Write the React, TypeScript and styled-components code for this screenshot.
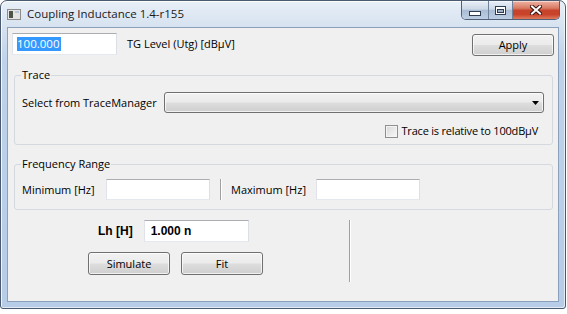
import React from "react";
import styled, { createGlobalStyle } from "styled-components";

const UI = `"Open Sans", "Noto Sans", "DejaVu Sans", sans-serif`;
const FS = 11;

const GlobalStyle = createGlobalStyle`
  html, body { margin: 0; padding: 0; background: #ffffff; }
  body { font-family: ${UI}; font-size: ${FS}px; color: #000; }
  * { box-sizing: border-box; }
`;

const Window = styled.div`
  width: 566px;
  height: 309px;
  border: 1px solid #4a5a70;
  border-radius: 7px 7px 3px 3px;
  background: linear-gradient(180deg, #e8eff7 0px, #d6e2f0 26px, #bed2ea 60px, #b6cce7 100%);
  box-shadow: inset 1px 1px 0 rgba(255, 255, 255, 0.8), inset -1px -1px 0 rgba(255, 255, 255, 0.6);
  display: flex;
  flex-direction: column;
  padding: 0 6px 6px 6px;
  overflow: hidden;
`;

const TitleBar = styled.div`
  height: 26px;
  display: flex;
  align-items: flex-start;
  margin-right: -1px;
`;

const AppIcon = styled.svg`
  margin-top: 8px;
  flex: none;
`;

const Title = styled.div`
  margin-left: 6px;
  margin-top: 5px;
  font-size: ${FS + 0.5}px;
  line-height: 16px;
  color: #1a1a1a;
  white-space: nowrap;
`;

const Caption = styled.div`
  margin-left: auto;
  display: flex;
  height: 19px;
  border: 1px solid #4f6078;
  border-top: 0;
  border-radius: 0 0 5px 5px;
  overflow: hidden;
`;

const CapButton = styled.div<{ $w: number; $close?: boolean }>`
  width: ${(p) => p.$w}px;
  display: flex;
  align-items: center;
  justify-content: center;
  border-right: ${(p) => (p.$close ? "0" : "1px solid #6f8299")};
  background: ${(p) =>
    p.$close
      ? "linear-gradient(180deg, #eeb3a4 0%, #d87a63 40%, #c8432b 52%, #c9432a 75%, #e07a5c 100%)"
      : "linear-gradient(180deg, #e9eff7 0%, #cdd9e8 45%, #aabdd5 52%, #bdcee3 100%)"};
  box-shadow: inset 0 1px 0 rgba(255, 255, 255, 0.5);
`;

const Client = styled.div`
  flex: 1;
  border: 1px solid #8aa0bb;
  background: #f0f0f0;
  display: flex;
  flex-direction: column;
`;

const TopRow = styled.div`
  display: flex;
  align-items: flex-start;
  padding: 5px 4px 0 4px;
`;

const TextBox = styled.div<{ $w: number; $h?: number; $bold?: boolean; $pl?: number }>`
  width: ${(p) => p.$w}px;
  height: ${(p) => p.$h ?? 22}px;
  flex: none;
  background: #ffffff;
  border: 1px solid;
  border-color: #abadb3 #dbdfe6 #e3e9ef #e2e3ea;
  display: flex;
  align-items: center;
  padding-left: ${(p) => p.$pl ?? 4}px;
  font-family: ${(p) => (p.$bold ? `"Liberation Sans", Arial, sans-serif` : UI)};
  font-weight: ${(p) => (p.$bold ? 700 : 400)};
  font-size: ${(p) => (p.$bold ? 12 : FS)}px;
  white-space: nowrap;
`;

const Selected = styled.span`
  background: #3399ff;
  color: #ffffff;
  line-height: 14px;
  padding: 0 2px 0 0;
  font-size: 11.5px;
`;

const Label = styled.span<{ $w?: number; $ml?: number; $bold?: boolean }>`
  ${(p) => (p.$w ? `width: ${p.$w}px;` : "")}
  ${(p) => (p.$ml ? `margin-left: ${p.$ml}px;` : "")}
  flex: none;
  font-size: ${(p) => (p.$bold ? 12 : FS)}px;
  line-height: 16px;
  white-space: nowrap;
  font-family: ${(p) => (p.$bold ? `"Liberation Sans", Arial, sans-serif` : UI)};
  font-weight: ${(p) => (p.$bold ? 700 : 400)};
`;

const Button = styled.button<{ $w: number; $h: number; $auto?: boolean; $mt?: number }>`
  width: ${(p) => p.$w}px;
  height: ${(p) => p.$h}px;
  flex: none;
  margin: ${(p) => p.$mt ?? 0}px 0 0 ${(p) => (p.$auto ? "auto" : "0")};
  padding: 0;
  border: 1px solid #707070;
  border-radius: 3px;
  background: linear-gradient(180deg, #f2f2f2 0%, #ebebeb 48%, #dddddd 52%, #cfcfcf 100%);
  box-shadow: inset 0 0 0 1px rgba(255, 255, 255, 0.7);
  font-family: ${UI};
  font-size: ${FS}px;
  color: #000;
  line-height: 16px;
`;

const Group = styled.fieldset`
  margin: 11px 5px 0 6px;
  padding: 0;
  border: 1px solid #d3d9de;
  border-radius: 3px;
  min-width: 0;
`;

const Legend = styled.legend`
  margin-left: 6px;
  padding: 0 1px;
  font-size: ${FS}px;
  line-height: 16px;
`;

const GroupBody = styled.div<{ $pt: number; $pb: number }>`
  padding: ${(p) => p.$pt}px 7px ${(p) => p.$pb}px 7px;
  display: flex;
  flex-direction: column;
`;

const Row = styled.div<{ $h: number; $mt?: number; $end?: boolean }>`
  display: flex;
  align-items: center;
  height: ${(p) => p.$h}px;
  margin-top: ${(p) => p.$mt ?? 0}px;
  justify-content: ${(p) => (p.$end ? "flex-end" : "flex-start")};
`;

const Combo = styled.div`
  flex: 1;
  height: 21px;
  margin-left: 7px;
  margin-right: 1px;
  border: 1px solid #707070;
  border-radius: 3px;
  background: linear-gradient(180deg, #f2f2f2 0%, #ebebeb 48%, #dddddd 52%, #cfcfcf 100%);
  box-shadow: inset 0 0 0 1px rgba(255, 255, 255, 0.7);
  display: flex;
  align-items: center;
  justify-content: flex-end;
  padding-right: 4px;
`;

const CheckBox = styled.span`
  width: 13px;
  height: 13px;
  flex: none;
  border: 1px solid #8f8f8f;
  background: linear-gradient(135deg, #d6d6d6 0%, #ececec 60%, #f8f8f8 100%);
  box-shadow: inset 0 0 0 1px #f4f4f4;
  margin-right: 4px;
`;

const CheckLabel = styled.span`
  font-size: ${FS}px;
  line-height: 16px;
  letter-spacing: -0.2px;
  margin-right: 7px;
`;

const VSep = styled.div<{ $h: number; $mx?: number }>`
  width: 1px;
  height: ${(p) => p.$h}px;
  flex: none;
  margin: 0 ${(p) => p.$mx ?? 0}px;
  background: #a0a0a0;
  box-shadow: 1px 0 0 #ffffff;
`;

const BottomPanel = styled.div`
  display: flex;
  align-items: flex-start;
  padding-top: 10px;
`;

const LeftCol = styled.div`
  width: 341px;
  flex: none;
  display: flex;
  flex-direction: column;
  padding-left: 80px;
`;

const LhRow = styled.div`
  display: flex;
  align-items: center;
  gap: 11px;
  margin-left: 10px;
  height: 22px;
`;

const ButtonRow = styled.div`
  display: flex;
  gap: 11px;
  margin-top: 10px;
`;

export default function App() {
  return (
    <>
      <GlobalStyle />
      <Window>
        <TitleBar>
          <AppIcon width="14" height="11" viewBox="0 0 14 11">
            <rect x="0.5" y="0.5" width="13" height="10" fill="#e4e4e4" stroke="#8c8c8c" />
            <rect x="2" y="2" width="4" height="7" fill="#4b5548" />
            <rect x="8" y="2" width="4" height="2" fill="#b9c7d8" />
          </AppIcon>
          <Title>Coupling Inductance 1.4-r155</Title>
          <Caption>
            <CapButton $w={27}>
              <svg width="12" height="5" viewBox="0 0 12 5" style={{ marginTop: 6 }}>
                <rect x="0.5" y="0.5" width="11" height="4" fill="#ffffff" stroke="#2e3d52" />
              </svg>
            </CapButton>
            <CapButton $w={24}>
              <svg width="11" height="9" viewBox="0 0 11 9">
                <rect x="0.5" y="0.5" width="10" height="8" fill="#ffffff" stroke="#2e3d52" />
                <rect x="2.5" y="3.5" width="6" height="3" fill="#9fb2c8" stroke="#2e3d52" />
              </svg>
            </CapButton>
            <CapButton $w={46} $close>
              <svg width="12" height="10" viewBox="0 0 12 10">
                <path d="M2 1.5 L10 8.5 M10 1.5 L2 8.5" stroke="#3a1410" strokeWidth="4" strokeLinecap="square" />
                <path d="M2 1.5 L10 8.5 M10 1.5 L2 8.5" stroke="#ffffff" strokeWidth="2" strokeLinecap="square" />
              </svg>
            </CapButton>
          </Caption>
        </TitleBar>
        <Client>
          <TopRow>
            <TextBox $w={105}>
              <Selected>100.000</Selected>
            </TextBox>
            <Label $ml={10} style={{ marginTop: 3 }}>TG Level (Utg) [dBµV]</Label>
            <Button $w={82} $h={22} $auto $mt={1}>Apply</Button>
          </TopRow>

          <Group>
            <Legend>Trace</Legend>
            <GroupBody $pt={9} $pb={5}>
              <Row $h={21}>
                <Label>Select from TraceManager</Label>
                <Combo>
                  <svg width="7" height="4" viewBox="0 0 7 4">
                    <path d="M0 0 H7 L3.5 4 Z" fill="#000" />
                  </svg>
                </Combo>
              </Row>
              <Row $h={16} $mt={10} $end>
                <CheckBox />
                <CheckLabel>Trace is relative to 100dBµV</CheckLabel>
              </Row>
            </GroupBody>
          </Group>

          <Group>
            <Legend>Frequency Range</Legend>
            <GroupBody $pt={7} $pb={9}>
              <Row $h={21}>
                <Label $w={84}>Minimum [Hz]</Label>
                <TextBox $w={104} $h={21} />
                <VSep $h={21} $mx={10} />
                <Label $w={85}>Maximum [Hz]</Label>
                <TextBox $w={104} $h={21} />
              </Row>
            </GroupBody>
          </Group>

          <BottomPanel>
            <LeftCol>
              <LhRow>
                <Label $bold>Lh [H]</Label>
                <TextBox $w={105} $bold $pl={6}>1.000 n</TextBox>
              </LhRow>
              <ButtonRow>
                <Button $w={82} $h={23}>Simulate</Button>
                <Button $w={82} $h={23}>Fit</Button>
              </ButtonRow>
            </LeftCol>
            <VSep $h={62} />
          </BottomPanel>
        </Client>
      </Window>
    </>
  );
}
